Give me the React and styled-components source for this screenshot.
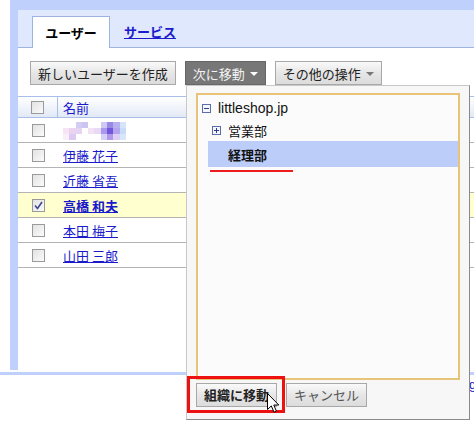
import React from 'react';
import styled, {createGlobalStyle} from 'styled-components';

const GlobalStyle = createGlobalStyle`
  html, body {
    margin: 0;
    padding: 0;
    background: #fff;
  }
  body {
    font-family: "Liberation Sans", "Noto Sans CJK JP", sans-serif;
    font-size: 13px;
    color: #222;
  }
`;

const blue = '#bfd0fc';
const jp = '"Noto Sans CJK JP", "Liberation Sans", sans-serif';

const users = [
  {id: 1, blurred: true},
  {id: 2, name: '伊藤 花子'},
  {id: 3, name: '近藤 省吾'},
  {id: 4, name: '高橋 和夫', checked: true},
  {id: 5, name: '本田 梅子'},
  {id: 6, name: '山田 三郎'},
];

const mosaic = [
  ['', '', '#d4ccf4', '#ccc4f2', '', '', '#cfc8f4', '#9a88e6', '#b8b0f0', '#d6e4fa'],
  ['#f4e4f4', '#ead4f2', '#e6d4f4', '', '#f2e2f4', '#e8daf6', '#a898ee', '#7456da', '#b4a4ee', '#c8dcf8'],
  ['#faeefa', '#dccaf2', '', '', '', '', '#d4d2f8', '#b098ea', '#ddd0f6', '#d8e6fa'],
];

const Check = ({checked}) => (
  <CheckBox>
    {checked && (
      <svg width="9" height="9" viewBox="0 0 9 9">
        <path d="M1 4.5 L3.5 7.5 L8 1" fill="none" stroke="#3b4a8a" strokeWidth="1.6" />
      </svg>
    )}
  </CheckBox>
);

const TreeToggle = ({open}) => (
  <Toggle>
    <svg width="9" height="9" viewBox="0 0 9 9">
      <rect x="0.5" y="0.5" width="8" height="8" fill="#f4f6fc" stroke="#5b6ea8" />
      <path d="M2 4.5 H7" stroke="#2d3f8c" strokeWidth="1" />
      {!open && <path d="M4.5 2 V7" stroke="#2d3f8c" strokeWidth="1" />}
    </svg>
  </Toggle>
);

const App = () => (
  <Page>
    <GlobalStyle />
    <Frame>
      <TabBar>
        <Tab>ユーザー</Tab>
        <TabLink href="#">サービス</TabLink>
      </TabBar>
      <Toolbar>
        <Button>新しいユーザーを作成</Button>
        <Button pressed>次に移動<Caret light /></Button>
        <Button>その他の操作<Caret /></Button>
      </Toolbar>
      <Table>
        <HeadRow>
          <CheckCell head><Check /></CheckCell>
          <NameCell>名前</NameCell>
        </HeadRow>
        {users.map((u) => (
          <Row key={u.id} highlight={u.checked}>
            <CheckCell><Check checked={u.checked} /></CheckCell>
            <NameCell>
              {u.blurred ? (
                <Mosaic>
                  {mosaic.flat().map((c, i) => (
                    <span key={i} style={{background: c || 'transparent'}} />
                  ))}
                </Mosaic>
              ) : (
                <NameLink href="#" bold={u.checked}>{u.name}</NameLink>
              )}
            </NameCell>
          </Row>
        ))}
      </Table>
    </Frame>
    <FooterLine />
    <Footer><FooterLink href="#">g</FooterLink></Footer>

    <Dialog>
      <TreePanel>
        <TreeItem indent={4}>
          <TreeToggle open />
          <TreeLabel latin>littleshop.jp</TreeLabel>
        </TreeItem>
        <TreeItem indent={14}>
          <TreeToggle />
          <TreeLabel>営業部</TreeLabel>
        </TreeItem>
        <TreeItem indent={20} selected>
          <TreeLabel bold>経理部</TreeLabel>
        </TreeItem>
        <RedUnderline />
      </TreePanel>
      <DialogActions>
        <Highlight>
          <Button bold wide>組織に移動</Button>
        </Highlight>
        <Button wide muted>キャンセル</Button>
      </DialogActions>
    </Dialog>

    <Cursor>
      <svg width="13" height="21" viewBox="0 0 13 21">
        <path
          d="M0.5 0.5 L0.5 16.5 L4.3 12.9 L7 19.2 L9.4 18.2 L6.8 12 L11.8 12 Z"
          fill="#fff"
          stroke="#000"
          strokeWidth="1"
          strokeLinejoin="miter"
        />
      </svg>
    </Cursor>
  </Page>
);

const Page = styled.div`
  position: relative;
  width: 474px;
  height: 427px;
  overflow: hidden;
  background: #fff;
`;

const Frame = styled.div`
  box-sizing: border-box;
  height: 370px;
  margin-left: 10px;
  border-top: 10px solid ${blue};
  border-left: 8px solid ${blue};
  background: #fff;
`;

const TabBar = styled.div`
  box-sizing: border-box;
  height: 38px;
  padding-left: 14px;
  background: #e0e8fd;
  border-bottom: 1px solid #9db4e3;
  display: flex;
  align-items: flex-end;
`;

const Tab = styled.div`
  box-sizing: border-box;
  width: 78px;
  height: 32px;
  margin-bottom: -1px;
  background: #fff;
  border: 1px solid #9db4e3;
  border-bottom: none;
  display: flex;
  align-items: center;
  justify-content: center;
  font-family: ${jp};
  font-weight: bold;
  font-size: 13px;
  color: #000;
`;

const TabLink = styled.a`
  height: 32px;
  margin-left: 14px;
  display: flex;
  align-items: center;
  font-family: ${jp};
  font-weight: bold;
  font-size: 13px;
  color: #1a1acc;
  text-decoration: underline;
`;

const Toolbar = styled.div`
  display: flex;
  gap: 9px;
  padding: 13px 0 0 12px;
`;

const Button = styled.button`
  box-sizing: border-box;
  height: 24px;
  padding: 0 ${(p) => (p.wide ? '0' : '7px')};
  width: ${(p) => (p.wide ? '81px' : 'auto')};
  display: inline-flex;
  align-items: center;
  justify-content: center;
  gap: 5px;
  font-family: ${jp};
  font-size: 13px;
  font-weight: ${(p) => (p.bold ? 'bold' : 'normal')};
  color: ${(p) => (p.pressed ? '#f2f2f2' : p.muted ? '#555' : '#222')};
  background: ${(p) =>
    p.pressed ? '#777' : 'linear-gradient(#fafafa, #e6e6e6 50%, #dcdcdc)'};
  border: 1px solid ${(p) => (p.pressed ? '#666' : '#a8a8a8')};
  border-radius: 0;
  white-space: nowrap;
`;

const Caret = styled.span`
  width: 0;
  height: 0;
  border-left: 4px solid transparent;
  border-right: 4px solid transparent;
  border-top: 4px solid ${(p) => (p.light ? '#fff' : '#777')};
  margin-top: 2px;
`;

const Table = styled.div`
  margin-top: 11px;
`;

const HeadRow = styled.div`
  box-sizing: border-box;
  height: 22px;
  display: flex;
  background: linear-gradient(#ffffff, #e2e9f6);
  border-top: 1px solid #a9bfe9;
  border-bottom: 1px solid #a9bfe9;
`;

const Row = styled.div`
  box-sizing: border-box;
  height: 25px;
  display: flex;
  background: ${(p) => (p.highlight ? '#ffffd0' : '#fff')};
  border-bottom: 1px solid #b4b4b4;
`;

const CheckCell = styled.div`
  box-sizing: border-box;
  width: 40px;
  display: flex;
  align-items: center;
  justify-content: center;
  border-right: ${(p) => (p.head ? '1px solid #a9bfe9' : 'none')};
`;

const NameCell = styled.div`
  flex: 1;
  display: flex;
  align-items: center;
  padding-left: 5px;
  font-family: ${jp};
  font-size: 13px;
  color: #1a1acc;
`;

const NameLink = styled.a`
  color: #1a1acc;
  text-decoration: underline;
  font-weight: ${(p) => (p.bold ? 'bold' : 'normal')};
  white-space: pre;
`;

const CheckBox = styled.span`
  box-sizing: border-box;
  width: 13px;
  height: 13px;
  display: flex;
  align-items: center;
  justify-content: center;
  border: 1px solid #9a9a9a;
  background: linear-gradient(135deg, #e2e2e2, #fbfbfb);
`;

const Mosaic = styled.div`
  display: grid;
  grid-template-columns: repeat(10, 6.3px);
  grid-auto-rows: 6px;
  margin-top: 1px;

  span {
    display: block;
  }
`;

const FooterLine = styled.div`
  height: 3px;
  margin-top: 2px;
  background: ${blue};
`;

const Footer = styled.div`
  padding: 2px 0 0 469px;
  white-space: nowrap;
`;

const FooterLink = styled.a`
  font-family: "Liberation Sans", sans-serif;
  font-size: 13px;
  color: #1a1acc;
  text-decoration: underline;
`;

const Dialog = styled.div`
  position: absolute;
  left: 186px;
  top: 85px;
  box-sizing: border-box;
  width: 284px;
  height: 335px;
  padding: 7px 9px 0 9px;
  background: #f7f7f7;
  border: 1px solid #c8c8c8;
  border-right-color: #8a8a8a;
  border-bottom-color: #8a8a8a;
  display: flex;
  flex-direction: column;
`;

const TreePanel = styled.div`
  box-sizing: border-box;
  height: 287px;
  padding-top: 2px;
  background: #fbfbfb;
  border: 2px solid #e8c478;
  display: flex;
  flex-direction: column;
`;

const TreeItem = styled.div`
  box-sizing: border-box;
  height: ${(p) => (p.selected ? '26px' : '22px')};
  display: flex;
  align-items: center;
  gap: 7px;
  padding-left: ${(p) => p.indent}px;
  margin-left: ${(p) => (p.selected ? '10px' : '0')};
  background: ${(p) => (p.selected ? '#bccdfa' : 'transparent')};
`;

const Toggle = styled.span`
  display: flex;
  width: 9px;
  height: 9px;
`;

const TreeLabel = styled.span`
  font-family: ${(p) => (p.latin ? '"Liberation Sans", sans-serif' : jp)};
  font-size: ${(p) => (p.latin ? '14px' : '13px')};
  font-weight: ${(p) => (p.bold ? 'bold' : 'normal')};
  color: #111;
`;

const RedUnderline = styled.div`
  width: 83px;
  height: 2px;
  margin: 3px 0 0 12px;
  background: #ee1c1c;
`;

const DialogActions = styled.div`
  display: flex;
  align-items: center;
  margin: -4px 0 0 -9px;
`;

const Highlight = styled.div`
  box-sizing: border-box;
  width: 98px;
  height: 37px;
  border: 3px solid #ee1111;
  display: flex;
  align-items: center;
  padding-left: 6px;
  margin-right: 1px;
`;

const Cursor = styled.div`
  position: absolute;
  left: 267px;
  top: 393px;
  line-height: 0;
`;

export default App;
